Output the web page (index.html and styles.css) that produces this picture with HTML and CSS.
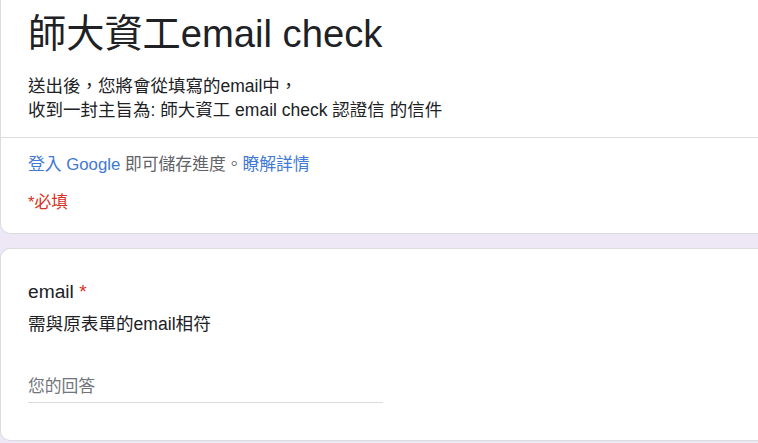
FILE: index.html
```html
<!DOCTYPE html>
<html lang="zh-Hant">
<head>
    <meta charset="UTF-8">
    <meta name="viewport" content="width=device-width, initial-scale=1.0">
    <title>師大資工email check</title>
    <link rel="stylesheet" href="styles.css">
</head>
<body>
    <div class="form">
        <div class="card header-card">
            <div class="header">
                <h1 class="form-title">師大資工email check</h1>
                <div class="form-desc">
                    送出後，您將會從填寫的email中，<br>
                    收到一封主旨為: 師大資工 email check 認證信 的信件
                </div>
            </div>
            <div class="signin">
                <p class="signin-text"><a href="#">登入 Google</a> 即可儲存進度。<a href="#">瞭解詳情</a></p>
                <p class="required-note">*必填</p>
            </div>
        </div>

        <div class="card question">
            <div class="question-title">email <span class="star">*</span></div>
            <div class="question-desc">需與原表單的email相符</div>
            <div class="answer">
                <input type="text" placeholder="您的回答">
            </div>
        </div>
    </div>
</body>
</html>
```

FILE: styles.css
```css
body {
    margin: 0;
    background-color: #ede7f6;
    font-family: "Liberation Sans", "Noto Sans CJK TC", sans-serif;
    color: #202124;
}

.card {
    background: #fff;
    border: 1px solid #dadce0;
    border-right: none;
    border-radius: 10px 0 0 10px;
}

.header-card {
    border-top: none;
    border-radius: 0 0 0 10px;
}

.header {
    padding: 10px 27px 15px;
    border-bottom: 1px solid #dadce0;
}

.form-title {
    margin: 0;
    font-size: 38.2px;
    font-weight: 400;
    line-height: 48px;
}

.form-desc {
    margin-top: 16px;
    font-size: 17.5px;
    line-height: 24px;
}

.signin {
    padding: 15px 27px 18px;
}

.signin p {
    margin: 0;
    font-size: 16.8px;
    line-height: 24px;
}

.signin-text {
    color: #5f6368;
}

.signin-text a {
    color: #4179d6;
    text-decoration: none;
}

.signin .required-note {
    margin-top: 14px;
    color: #d93025;
}

.question {
    margin-top: 14px;
    padding: 31px 27px 37px;
}

.question-title {
    font-size: 19.2px;
    line-height: 24px;
}

.star {
    color: #d93025;
}

.question-desc {
    margin-top: 8px;
    font-size: 17.6px;
    line-height: 24px;
}

.answer {
    margin-top: 39px;
    width: 355px;
    border-bottom: 1px solid #dadce0;
    padding-bottom: 3px;
}

.answer input {
    display: block;
    width: 100%;
    border: none;
    outline: none;
    padding: 0;
    font-family: inherit;
    font-size: 16.8px;
    line-height: 24px;
    height: 24px;
    color: #202124;
}

.answer input::placeholder {
    color: #70757a;
}
```
